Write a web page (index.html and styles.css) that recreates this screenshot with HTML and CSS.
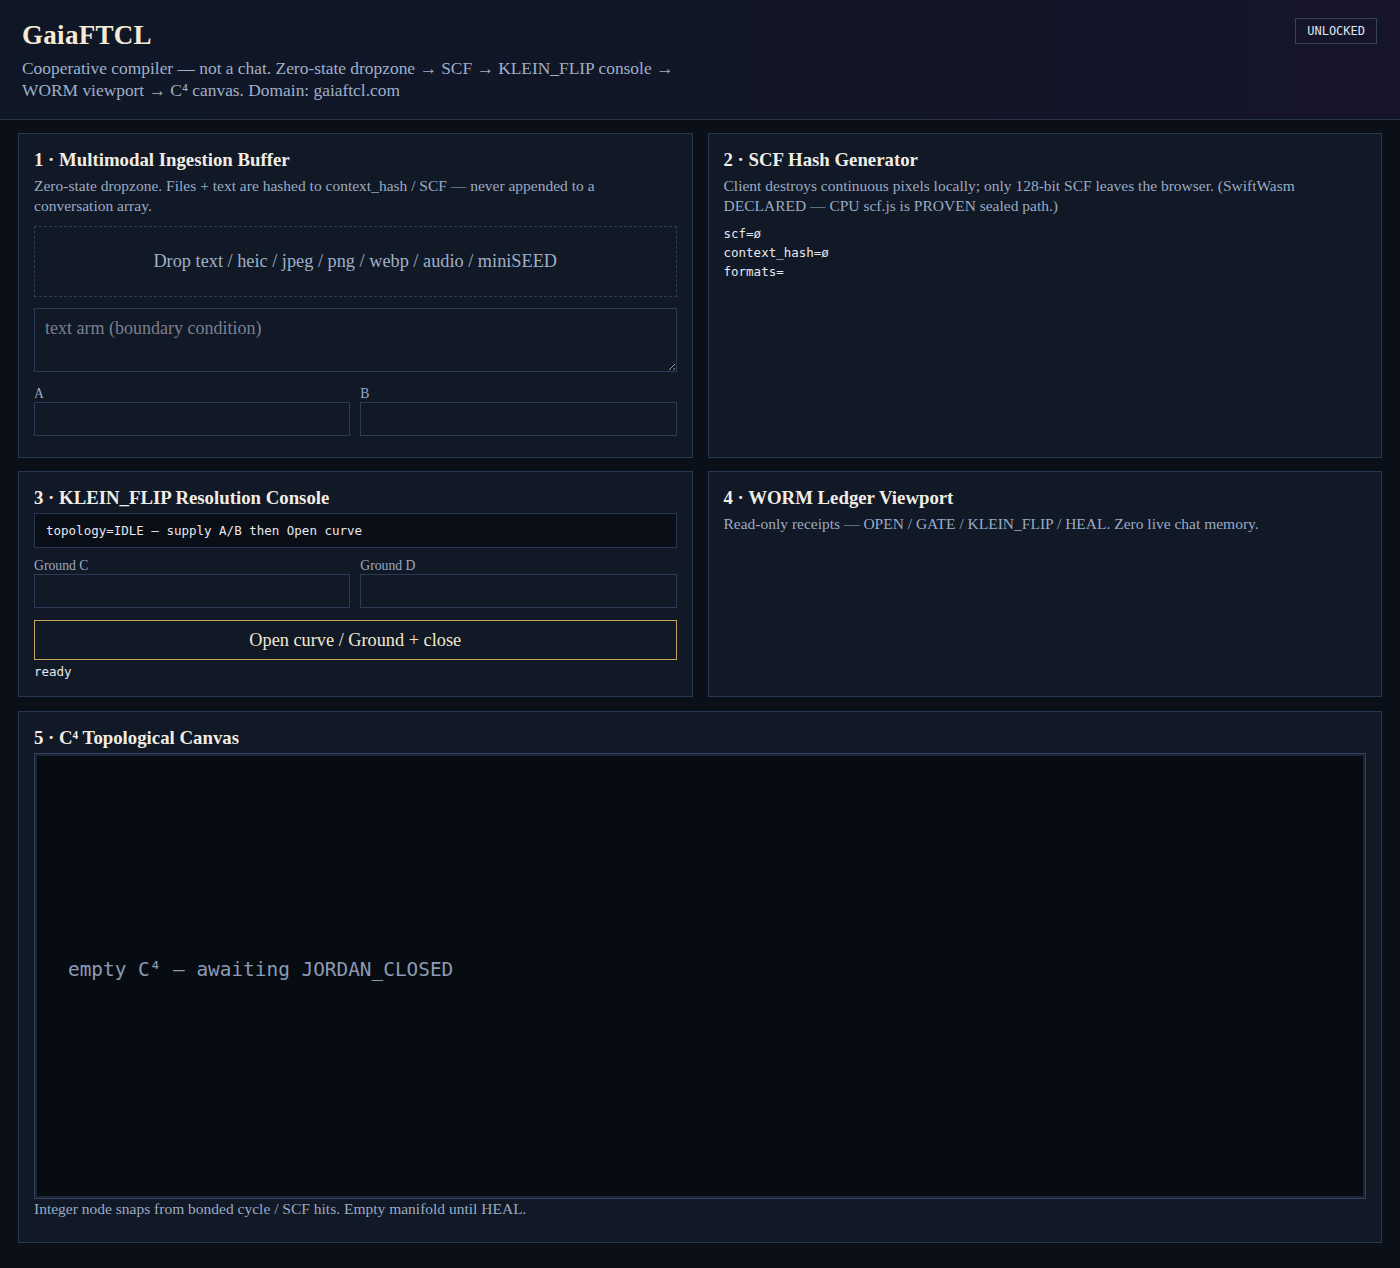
FILE: index.html
```html
<!DOCTYPE html>
<html>
<head>
    <title>GaiaFTCL</title>
    <link rel="stylesheet" href="styles.css">
</head>
<body>
<div id="header">
    <div class="brand">
        <h1>GaiaFTCL</h1>
        <p class="lede">Cooperative compiler — not a chat. Zero-state dropzone → SCF → KLEIN_FLIP console →<br>WORM viewport → C⁴ canvas. Domain: gaiaftcl.com</p>
    </div>
    <span class="badge">UNLOCKED</span>
</div>

<div id="grid">
    <!-- 1 -->
    <div class="panel">
        <h2>1 · Multimodal Ingestion Buffer</h2>
        <p class="desc">Zero-state dropzone. Files + text are hashed to context_hash / SCF — never appended to a conversation array.</p>
        <div class="dropzone">Drop text / heic / jpeg / png / webp / audio / miniSEED</div>
        <textarea class="arm" placeholder="text arm (boundary condition)"></textarea>
        <div class="pair">
            <label class="field"><span>A</span><input type="text"></label>
            <label class="field"><span>B</span><input type="text"></label>
        </div>
    </div>

    <!-- 2 -->
    <div class="panel">
        <h2>2 · SCF Hash Generator</h2>
        <p class="desc">Client destroys continuous pixels locally; only 128-bit SCF leaves the browser. (SwiftWasm DECLARED — CPU scf.js is PROVEN sealed path.)</p>
        <pre class="mono">scf=ø
context_hash=ø
formats=</pre>
    </div>

    <!-- 3 -->
    <div class="panel tight">
        <h2>3 · KLEIN_FLIP Resolution Console</h2>
        <div class="console">topology=IDLE — supply A/B then Open curve</div>
        <div class="pair">
            <label class="field"><span>Ground C</span><input type="text"></label>
            <label class="field"><span>Ground D</span><input type="text"></label>
        </div>
        <button class="run">Open curve / Ground + close</button>
        <div class="status">ready</div>
    </div>

    <!-- 4 -->
    <div class="panel">
        <h2>4 · WORM Ledger Viewport</h2>
        <p class="desc">Read-only receipts — OPEN / GATE / KLEIN_FLIP / HEAL. Zero live chat memory.</p>
    </div>

    <!-- 5 -->
    <div class="panel wide">
        <h2>5 · C⁴ Topological Canvas</h2>
        <div class="canvas">
            <span class="empty">empty C⁴ — awaiting JORDAN_CLOSED</span>
        </div>
        <p class="desc caption">Integer node snaps from bonded cycle / SCF hits. Empty manifold until HEAL.</p>
    </div>
</div>
</body>
</html>
```

FILE: styles.css
```css
body {
    font-family: "Liberation Serif", "DejaVu Serif", serif;
    background-color: #0b0f17;
    color: #e6e2d8;
    margin: 0;
    padding: 0;
}

/* Encabezado */
#header {
    background: linear-gradient(90deg, #0f1727 0%, #121626 55%, #16142a 100%);
    border-bottom: 1px solid #27344a;
    display: flex;
    justify-content: space-between;
    align-items: flex-start;
    padding: 18px 22px 18px 22px;
    height: 83px;
}

#header h1 {
    margin: 0;
    font-size: 27px;
    line-height: 34px;
    font-weight: bold;
    color: #f4ead6;
    letter-spacing: 0.3px;
}

.lede {
    margin: 5px 0 0 0;
    font-size: 17.4px;
    line-height: 22px;
    color: #9fb0c8;
}

.badge {
    font-family: "DejaVu Sans Mono", monospace;
    font-size: 12px;
    color: #dfe5ef;
    border: 1px solid #34435e;
    padding: 5px 11px;
    margin-right: 1px;
}

/* Rejilla de paneles */
#grid {
    display: grid;
    grid-template-columns: 1fr 1fr;
    gap: 13px 15px;
    padding: 13px 18px 18px 18px;
}

.panel {
    background-color: #111826;
    border: 1px solid #283750;
    padding: 14px 15px 21px 15px;
    display: flex;
    flex-direction: column;
}

.panel.tight {
    padding-bottom: 16px;
}

.panel.wide {
    grid-column: 1 / span 2;
    padding-bottom: 23px;
    margin-top: 1px;
}

.panel h2 {
    margin: 0;
    font-size: 18.8px;
    line-height: 24px;
    font-weight: bold;
    color: #f1ede5;
}

.desc {
    margin: 4px 0 0 0;
    font-size: 15.5px;
    line-height: 20px;
    color: #9aabc4;
}

.dropzone {
    margin-top: 10px;
    height: 69px;
    border: 1px dashed #2d3c58;
    display: flex;
    align-items: center;
    justify-content: center;
    font-size: 18.3px;
    color: #9fb0c8;
}

.arm {
    margin-top: 11px;
    height: 64px;
    box-sizing: border-box;
    background-color: #111826;
    border: 1px solid #2b3a56;
    border-radius: 0;
    padding: 9px 10px;
    font-family: "Liberation Serif", serif;
    font-size: 18px;
    color: #d8d4cc;
    resize: vertical;
}

.arm::placeholder {
    color: #7a8090;
}

.pair {
    display: flex;
    gap: 10px;
    margin-top: 14px;
}

.field {
    flex: 1;
    display: flex;
    flex-direction: column;
}

.field span {
    font-size: 13.7px;
    line-height: 16px;
    color: #9aabc4;
}

.field input {
    height: 34px;
    box-sizing: border-box;
    background-color: #111826;
    border: 1px solid #2b3a56;
    border-radius: 0;
    margin: 0;
    color: #e6e2d8;
}

.mono {
    font-family: "DejaVu Sans Mono", monospace;
    font-size: 12.5px;
    line-height: 19px;
    color: #e8e8ee;
    margin: 8px 0 0 0;
}

.console {
    margin-top: 3px;
    height: 35px;
    box-sizing: border-box;
    background-color: #0a0e16;
    border: 1px solid #283750;
    padding: 0 11px;
    display: flex;
    align-items: center;
    font-family: "DejaVu Sans Mono", monospace;
    font-size: 12.5px;
    color: #e8e8ee;
}

.panel .console + .pair {
    margin-top: 10px;
}

.run {
    margin-top: 12px;
    height: 40px;
    background-color: #111826;
    border: 1px solid #c9a062;
    font-family: "Liberation Serif", serif;
    font-size: 18.3px;
    color: #f2e8d2;
    cursor: pointer;
}

.status {
    margin-top: 4px;
    font-family: "DejaVu Sans Mono", monospace;
    font-size: 12.5px;
    line-height: 16px;
    color: #e8e8ee;
}

.canvas {
    margin-top: 3px;
    height: 444px;
    background-color: #070b12;
    border: 1px solid #33435f;
    box-shadow: inset 0 0 0 2px #1b2436;
    display: flex;
    align-items: center;
    padding-left: 33px;
}

.empty {
    font-family: "DejaVu Sans Mono", monospace;
    font-size: 19.4px;
    color: #8c9bb3;
    margin-bottom: 14px;
}

.caption {
    margin-top: 0;
}
```
